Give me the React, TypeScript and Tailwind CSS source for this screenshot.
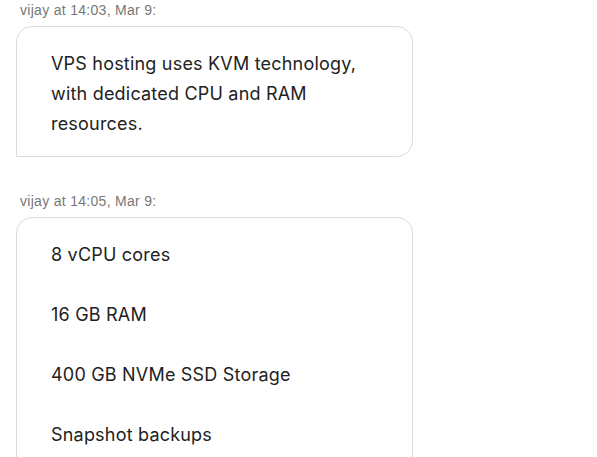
export default function App() {
  return (
    <div className="min-h-screen bg-white pl-4 pr-4 text-[#222]">
      <div className="font-['Liberation_Sans',Arial,sans-serif] text-[14px] leading-5 tracking-[0.3px] text-[#777] pl-1">
        vijay at 14:03, Mar 9:
      </div>
      <div className="mt-1.5 w-[397px] rounded-2xl rounded-bl-none border border-[#d8dde3] px-[34px] pt-[22px] pb-[17px] font-['Inter',sans-serif] text-[18px] leading-[30px] tracking-[0.2px]">
        VPS hosting uses KVM technology, with dedicated CPU and RAM resources.
      </div>

      <div className="mt-[34px] font-['Liberation_Sans',Arial,sans-serif] text-[14px] leading-5 tracking-[0.3px] text-[#777] pl-1">
        vijay at 14:05, Mar 9:
      </div>
      <div className="mt-1.5 w-[397px] rounded-2xl rounded-bl-none border border-[#d8dde3] px-[34px] pt-[22px] pb-[22px] font-['Inter',sans-serif] text-[18px] leading-[30px] tracking-[0.2px]">
        <p>8 vCPU cores</p>
        <p className="mt-[30px]">16 GB RAM</p>
        <p className="mt-[30px]">400 GB NVMe SSD Storage</p>
        <p className="mt-[30px]">Snapshot backups</p>
      </div>
    </div>
  );
}
